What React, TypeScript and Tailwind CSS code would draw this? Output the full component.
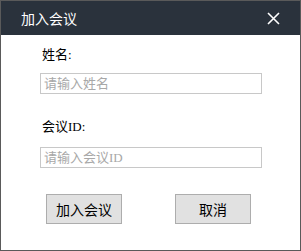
import React from "react";

export default function App() {
  const font = { fontFamily: '"Liberation Serif", "Noto Sans CJK SC", sans-serif' };
  const sans = { fontFamily: '"Noto Sans CJK SC", sans-serif' };
  return (
    <div className="w-[301px] h-[251px] bg-white border border-[#5a5a5a] flex flex-col overflow-hidden">
      <div className="h-[34px] bg-[#2a323c] flex items-center justify-between pl-[20px] pr-[20px] shrink-0">
        <span className="text-white text-[14px] leading-none" style={sans}>加入会议</span>
        <svg width="13" height="13" viewBox="0 0 13 13" className="block">
          <path d="M1 1L12 12M12 1L1 12" stroke="#ffffff" strokeWidth="1.6" />
        </svg>
      </div>
      <div className="flex flex-col pl-[39px]" style={font}>
        <div className="mt-[10px] h-[20px] leading-[20px] text-[13px] text-black pl-[2px]">姓名:</div>
        <input
          className="mt-[8px] w-[222px] h-[21px] border border-[#c8c8c8] px-[3px] text-[13px] outline-none placeholder:text-[#a8a8a8]"
          style={font}
          placeholder="请输入姓名"
        />
        <div className="mt-[23px] h-[20px] leading-[20px] text-[13px] text-black pl-[2px]">会议ID:</div>
        <input
          className="mt-[10px] w-[222px] h-[21px] border border-[#c8c8c8] px-[3px] text-[13px] outline-none placeholder:text-[#a8a8a8]"
          style={font}
          placeholder="请输入会议ID"
        />
        <div className="mt-[26px] flex ml-[6px] gap-[53px]">
          <button className="w-[76px] h-[30px] bg-[#e1e1e1] border border-[#adadad] text-[14px] text-black" style={sans}>加入会议</button>
          <button className="w-[76px] h-[30px] bg-[#e1e1e1] border border-[#adadad] text-[14px] text-black" style={sans}>取消</button>
        </div>
      </div>
    </div>
  );
}
